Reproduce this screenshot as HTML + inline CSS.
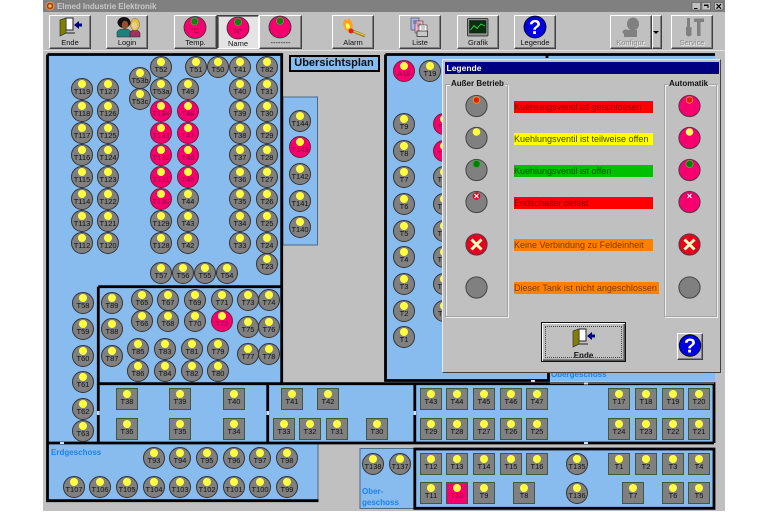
<!DOCTYPE html>
<html><head><meta charset="utf-8"><style>
html,body{margin:0;padding:0;background:#fff;width:768px;height:512px;overflow:hidden}
#w{position:absolute;left:0;top:0;width:768px;height:512px;overflow:hidden;filter:blur(.35px)}
#win{position:absolute;left:43px;top:0;width:682px;height:511px;background:#c0c0c0}
svg.l{position:absolute;left:0;top:0}
.t{position:absolute;width:22px;height:22px;margin:-11px 0 0 -11px;box-sizing:border-box;border:1px solid #333;border-radius:50%;background:#808080;color:#111;font:7.5px/25px "Liberation Sans",sans-serif;text-align:center}
.t:before{content:"";position:absolute;left:6px;top:1px;width:8px;height:8px;border-radius:50%;background:#ffff40}
.p{background:#f5006e;color:#8a003c;border-color:#70203c}
.s{border-radius:0;border-color:#3d5a3d}
.b{position:absolute;top:15px;width:42px;height:34px;box-sizing:border-box;padding-top:22px;border:1px solid;border-color:#fff #404040 #404040 #fff;box-shadow:inset -1px -1px 0 #808080;background:#c0c0c0;color:#111;font:7.5px/10px "Liberation Sans",sans-serif;text-align:center}
.dis{color:#8c8c8c;text-shadow:1px 1px 0 #eee}
.bl{position:absolute;color:#1e82e6;font:bold 8px/10px "Liberation Sans",sans-serif;white-space:nowrap}
#dlg{position:absolute;left:442px;top:59px;width:279px;height:314px;box-sizing:border-box;background:#c0c0c0;border:1px solid;border-color:#e8e8e8 #404040 #404040 #e8e8e8}
#cap{position:absolute;left:444.5px;top:62px;width:274px;height:11.5px;background:#000080;color:#fff;font:bold 8.5px/12px "Liberation Sans",sans-serif;padding-left:2px;box-sizing:border-box}
.g{position:absolute;top:83.5px;height:233px;box-sizing:border-box;border:1px solid #a4a4a4;box-shadow:1px 1px 0 #eee,inset 1px 1px 0 #eee}
.gl{position:absolute;top:79px;background:#c0c0c0;color:#111;font:bold 8px/10px "Liberation Sans",sans-serif;padding:0 1px;white-space:nowrap}
.bar{position:absolute;left:514px;width:139px;height:12px;font:9px/12px "Liberation Sans",sans-serif;white-space:nowrap}
#eb{position:absolute;left:541px;top:322px;width:85px;height:40px;box-sizing:border-box;background:#c0c0c0;border:1px solid #111;box-shadow:inset 1px 1px 0 #fff,inset -1px -1px 0 #555,inset -2px -2px 0 #808080;color:#111;font:bold 8px/10px "Liberation Sans",sans-serif;text-align:center;padding-top:28px}
#eb:before{content:"";position:absolute;left:3px;top:3px;right:3px;bottom:3px;border:1px dotted #444}
#hb{position:absolute;left:677px;top:333px;width:26px;height:27px;box-sizing:border-box;background:#c0c0c0;border:1px solid;border-color:#fff #404040 #404040 #fff;box-shadow:inset -1px -1px 0 #808080}
#title{position:absolute;left:43px;top:0;width:682px;height:12px;background:#808080}
#tt{position:absolute;left:57px;top:1px;color:#c8c8c8;font:bold 8px/11px "Liberation Sans",sans-serif;white-space:nowrap;letter-spacing:-.06px}
#ub{position:absolute;left:288.5px;top:54.5px;width:91px;height:17px;box-sizing:border-box;background:#88bbee;border:2px solid #000;color:#111;font:bold 11px/13px "Liberation Sans",sans-serif;text-align:center}
</style></head><body><div id="w">
<div id="win"></div>
<div id="title"></div>
<div id="tt">Elmed Industrie Elektronik</div>

<div class="b" style="left:49px">Ende</div>
<div class="b" style="left:106px">Login</div>
<div class="b" style="left:174px;width:43px">Temp.</div>
<div class="b" style="left:217px;width:42px;background:#e4e4e4;border-color:#404040 #fff #fff #404040;box-shadow:inset 1px 1px 0 #808080;padding-top:23px">Name</div>
<div class="b" style="left:259px;width:43px">--------</div>
<div class="b" style="left:332px">Alarm</div>
<div class="b" style="left:399px">Liste</div>
<div class="b" style="left:457px">Grafik</div>
<div class="b" style="left:514px">Legende</div>
<div class="b dis" style="left:610px">Konfigur.</div>
<div class="b" style="left:652px;width:10px"></div>
<div class="b dis" style="left:671px">Service</div>

<svg class="l" width="768" height="512" viewBox="0 0 768 512">
<path d="M43 50.5H725" stroke="#e0e0e0" stroke-width="1"/>
<path d="M48 55H281V384H415V443H318V500H48Z" fill="#88bbee"/>
<path d="M283 97H317.5V245H283Z" fill="#88bbee" stroke="#4a6a8a"/>
<path d="M385 55H715V381H385Z" fill="#88bbee"/>
<path d="M415 384H714V443H415Z" fill="#88bbee"/>
<path d="M415 449H714V508H415Z" fill="#88bbee"/>
<path d="M360 448.5H415V508.5H360Z" fill="#88bbee" stroke="#4a6a8a"/>
<path d="M318 444V501" stroke="#4a6a8a" stroke-width="1"/>
<g fill="none" stroke="#000" stroke-width="2.8">
<path d="M47.5 54.5H281.7V383.5"/>
<path d="M47.5 54.5V500.7H318.5" />
<path d="M98.3 286.7H281.7"/>
<path d="M98.3 286.7V443"/>
<path d="M98.3 383.7H550"/>
<path d="M47.5 443H714"/>
<path d="M267.7 384V443"/>
<path d="M414.8 384V443"/>
<path d="M385.5 54.5H715"/>
<path d="M385.5 54.5V380.5H548.5V372"/>
<path d="M547 54V58"/>
<path d="M550 383.7H714V443"/>
<path d="M414.8 449H714V508.3H414.8Z"/>
</g>
<path d="M550 383.2H714" stroke="#4a5a6a" stroke-width="1.5"/>
<g fill="#cfe2f5">
<rect x="97" y="411" width="2.5" height="4"/><rect x="266.5" y="411" width="2.5" height="4"/><rect x="413.5" y="411" width="2.5" height="4"/>
<rect x="60" y="442" width="4" height="2"/><rect x="584" y="442" width="4" height="2"/><rect x="584" y="382.5" width="4" height="2"/>
<rect x="531" y="380" width="4" height="2"/>
</g>
</svg>

<div id="ub">Übersichtsplan</div>
<div class="bl" style="left:51px;top:448px">Erdgeschoss</div>
<div class="bl" style="left:362px;top:487px">Ober-</div>
<div class="bl" style="left:362px;top:498px">geschoss</div>
<div class="bl" style="left:551px;top:370px">Obergeschoss</div>

<i class="t" style="left:82px;top:89px">T119</i><i class="t" style="left:108px;top:89px">T127</i>
<i class="t" style="left:82px;top:111px">T118</i><i class="t" style="left:108px;top:111px">T126</i>
<i class="t" style="left:82px;top:133px">T117</i><i class="t" style="left:108px;top:133px">T125</i>
<i class="t" style="left:82px;top:155px">T116</i><i class="t" style="left:108px;top:155px">T124</i>
<i class="t" style="left:82px;top:177px">T115</i><i class="t" style="left:108px;top:177px">T123</i>
<i class="t" style="left:82px;top:199px">T114</i><i class="t" style="left:108px;top:199px">T122</i>
<i class="t" style="left:82px;top:221px">T113</i><i class="t" style="left:108px;top:221px">T121</i>
<i class="t" style="left:82px;top:243px">T112</i><i class="t" style="left:108px;top:243px">T120</i>
<i class="t" style="left:140px;top:78px">T53b</i><i class="t" style="left:140px;top:99px">T53c</i>
<i class="t" style="left:161px;top:67px">T52</i><i class="t" style="left:161px;top:89px">T53a</i>
<i class="t p" style="left:161px;top:111px">T134</i><i class="t p" style="left:161px;top:133px">T133</i><i class="t p" style="left:161px;top:155px">T132</i><i class="t p" style="left:161px;top:177px">T131</i><i class="t p" style="left:161px;top:199px">T130</i>
<i class="t" style="left:161px;top:221px">T129</i><i class="t" style="left:161px;top:243px">T128</i>
<i class="t" style="left:188px;top:89px">T49</i><i class="t p" style="left:188px;top:111px">T48</i><i class="t p" style="left:188px;top:133px">T47</i><i class="t p" style="left:188px;top:155px">T46</i><i class="t p" style="left:188px;top:177px">T45</i>
<i class="t" style="left:188px;top:199px">T44</i><i class="t" style="left:188px;top:221px">T43</i><i class="t" style="left:188px;top:243px">T42</i>
<i class="t" style="left:196px;top:67px">T51</i><i class="t" style="left:218px;top:67px">T50</i>
<i class="t" style="left:240px;top:67px">T41</i><i class="t" style="left:240px;top:89px">T40</i><i class="t" style="left:240px;top:111px">T39</i><i class="t" style="left:240px;top:133px">T38</i><i class="t" style="left:240px;top:155px">T37</i><i class="t" style="left:240px;top:177px">T36</i><i class="t" style="left:240px;top:199px">T35</i><i class="t" style="left:240px;top:221px">T34</i><i class="t" style="left:240px;top:243px">T33</i>
<i class="t" style="left:267px;top:67px">T82</i><i class="t" style="left:267px;top:89px">T31</i><i class="t" style="left:267px;top:111px">T30</i><i class="t" style="left:267px;top:133px">T29</i><i class="t" style="left:267px;top:155px">T28</i><i class="t" style="left:267px;top:177px">T27</i><i class="t" style="left:267px;top:199px">T26</i><i class="t" style="left:267px;top:221px">T25</i><i class="t" style="left:267px;top:243px">T24</i><i class="t" style="left:267px;top:264px">T23</i>
<i class="t" style="left:161px;top:273px">T57</i><i class="t" style="left:183px;top:273px">T56</i><i class="t" style="left:205px;top:273px">T55</i><i class="t" style="left:227px;top:273px">T54</i>

<i class="t" style="left:300px;top:121px">T144</i><i class="t p" style="left:300px;top:147px">T143</i><i class="t" style="left:300px;top:174px">T142</i><i class="t" style="left:300px;top:201px">T141</i><i class="t" style="left:300px;top:227px">T140</i>

<i class="t p" style="left:404px;top:71px">A18</i><i class="t" style="left:430px;top:71px">T19</i>
<i class="t" style="left:404px;top:124px">T9</i><i class="t" style="left:404px;top:151px">T8</i><i class="t" style="left:404px;top:177px">T7</i><i class="t" style="left:404px;top:204px">T6</i><i class="t" style="left:404px;top:231px">T5</i><i class="t" style="left:404px;top:257px">T4</i><i class="t" style="left:404px;top:284px">T3</i><i class="t" style="left:404px;top:311px">T2</i><i class="t" style="left:404px;top:337px">T1</i>
<i class="t p" style="left:444px;top:124px">T18</i><i class="t p" style="left:444px;top:151px">T17</i><i class="t" style="left:444px;top:177px">T16</i><i class="t" style="left:444px;top:204px">T15</i><i class="t" style="left:444px;top:231px">T14</i><i class="t" style="left:444px;top:257px">T13</i><i class="t" style="left:444px;top:284px">T12</i><i class="t" style="left:444px;top:311px">T11</i>

<i class="t" style="left:83px;top:303px">T58</i><i class="t" style="left:83px;top:329px">T59</i><i class="t" style="left:83px;top:356px">T60</i><i class="t" style="left:83px;top:382px">T61</i><i class="t" style="left:83px;top:409px">T62</i><i class="t" style="left:83px;top:431px">T63</i>
<i class="t" style="left:112px;top:303px">T89</i><i class="t" style="left:112px;top:329px">T88</i><i class="t" style="left:112px;top:356px">T87</i>
<i class="t" style="left:142px;top:300px">T65</i><i class="t" style="left:168px;top:300px">T67</i><i class="t" style="left:195px;top:300px">T69</i><i class="t" style="left:222px;top:300px">T71</i><i class="t" style="left:248px;top:300px">T73</i><i class="t" style="left:269px;top:300px">T74</i>
<i class="t" style="left:142px;top:321px">T66</i><i class="t" style="left:168px;top:321px">T68</i><i class="t" style="left:195px;top:321px">T70</i><i class="t p" style="left:222px;top:321px">T72</i>
<i class="t" style="left:248px;top:327px">T75</i><i class="t" style="left:269px;top:327px">T76</i>
<i class="t" style="left:248px;top:354px">T77</i><i class="t" style="left:269px;top:354px">T78</i>
<i class="t" style="left:138px;top:349px">T85</i><i class="t" style="left:165px;top:349px">T83</i><i class="t" style="left:192px;top:349px">T81</i><i class="t" style="left:218px;top:349px">T79</i>
<i class="t" style="left:138px;top:371px">T86</i><i class="t" style="left:165px;top:371px">T84</i><i class="t" style="left:192px;top:371px">T82</i><i class="t" style="left:218px;top:371px">T80</i>

<i class="t s" style="left:127px;top:399px">T38</i><i class="t s" style="left:180px;top:399px">T39</i><i class="t s" style="left:234px;top:399px">T40</i>
<i class="t s" style="left:127px;top:429px">T36</i><i class="t s" style="left:180px;top:429px">T35</i><i class="t s" style="left:234px;top:429px">T34</i>
<i class="t s" style="left:292px;top:399px">T41</i><i class="t s" style="left:328px;top:399px">T42</i>
<i class="t s" style="left:284px;top:429px">T33</i><i class="t s" style="left:310px;top:429px">T32</i><i class="t s" style="left:337px;top:429px">T31</i><i class="t s" style="left:377px;top:429px">T30</i>

<i class="t s" style="left:431px;top:399px">T43</i><i class="t s" style="left:457px;top:399px">T44</i><i class="t s" style="left:484px;top:399px">T45</i><i class="t s" style="left:511px;top:399px">T46</i><i class="t s" style="left:537px;top:399px">T47</i>
<i class="t s" style="left:619px;top:399px">T17</i><i class="t s" style="left:646px;top:399px">T18</i><i class="t s" style="left:673px;top:399px">T19</i><i class="t s" style="left:699px;top:399px">T20</i>
<i class="t s" style="left:431px;top:429px">T29</i><i class="t s" style="left:457px;top:429px">T28</i><i class="t s" style="left:484px;top:429px">T27</i><i class="t s" style="left:511px;top:429px">T26</i><i class="t s" style="left:537px;top:429px">T25</i>
<i class="t s" style="left:619px;top:429px">T24</i><i class="t s" style="left:646px;top:429px">T23</i><i class="t s" style="left:673px;top:429px">T22</i><i class="t s" style="left:699px;top:429px">T21</i>

<i class="t s" style="left:431px;top:464px">T12</i><i class="t s" style="left:457px;top:464px">T13</i><i class="t s" style="left:484px;top:464px">T14</i><i class="t s" style="left:511px;top:464px">T15</i><i class="t s" style="left:537px;top:464px">T16</i>
<i class="t" style="left:577px;top:464px">T135</i>
<i class="t s" style="left:619px;top:464px">T1</i><i class="t s" style="left:646px;top:464px">T2</i><i class="t s" style="left:673px;top:464px">T3</i><i class="t s" style="left:699px;top:464px">T4</i>
<i class="t s" style="left:431px;top:493px">T11</i><i class="t s p" style="left:457px;top:493px;border-radius:0">T10</i><i class="t s" style="left:484px;top:493px">T9</i><i class="t s" style="left:524px;top:493px">T8</i>
<i class="t" style="left:577px;top:493px">T136</i>
<i class="t s" style="left:633px;top:493px">T7</i><i class="t s" style="left:673px;top:493px">T6</i><i class="t s" style="left:699px;top:493px">T5</i>

<i class="t" style="left:373px;top:464px">T138</i><i class="t" style="left:400px;top:464px">T137</i>

<i class="t" style="left:154px;top:458px">T93</i><i class="t" style="left:180px;top:458px">T94</i><i class="t" style="left:207px;top:458px">T95</i><i class="t" style="left:234px;top:458px">T96</i><i class="t" style="left:260px;top:458px">T97</i><i class="t" style="left:287px;top:458px">T98</i>
<i class="t" style="left:74px;top:487px">T107</i><i class="t" style="left:100px;top:487px">T106</i><i class="t" style="left:127px;top:487px">T105</i><i class="t" style="left:154px;top:487px">T104</i><i class="t" style="left:180px;top:487px">T103</i><i class="t" style="left:207px;top:487px">T102</i><i class="t" style="left:234px;top:487px">T101</i><i class="t" style="left:260px;top:487px">T100</i><i class="t" style="left:287px;top:487px">T99</i>

<div id="dlg"></div>
<div id="cap">Legende</div>
<div class="g" style="left:445px;width:63px"></div>
<div class="g" style="left:664px;width:53px"></div>
<div class="gl" style="left:450px">Außer Betrieb</div>
<div class="gl" style="left:668px">Automatik</div>
<div class="bar" style="top:101px;background:#f00;color:#800000">Kuehlungsventil ist geschlossen</div>
<div class="bar" style="top:133px;background:#ff0;color:#444400">Kuehlungsventil ist teilweise offen</div>
<div class="bar" style="top:165px;background:#00c000;color:#004c00">Kuehlungsventil ist offen</div>
<div class="bar" style="top:197px;background:#f00;color:#800000">Endschalter defekt</div>
<div class="bar" style="top:239px;background:#ff8000;color:#704000">Keine Verbindung zu Feldeinheit</div>
<div class="bar" style="top:282px;width:145px;background:#ff8000;color:#704000">Dieser Tank ist nicht angeschlossen</div>
<div id="eb">Ende</div>
<div id="hb"></div>

<svg class="l" width="768" height="512" viewBox="0 0 768 512" font-family="Liberation Sans, sans-serif">
<defs>
<g id="door">
<path d="M6 1H13V13H6Z" fill="#fff" stroke="#222"/>
<path d="M6 16H15" stroke="#222"/>
<path d="M0 3L6 1V16L0 19Z" fill="#808000" stroke="#333" stroke-width=".7"/>
<path d="M14 8L19 4V6.5H22V9.5H19V12Z" fill="#000080"/>
</g>
<g id="x"><path d="M-5 -5L5 5M5 -5L-5 5" stroke="#ffffc0" stroke-width="3"/></g>
</defs>
<!-- title -->
<circle cx="50" cy="6" r="4" fill="#b04010" stroke="#e0a060"/>
<circle cx="50" cy="6" r="1.6" fill="#f0c060"/>
<g fill="#c0c0c0" stroke="#555" stroke-width=".6">
<rect x="692" y="2.5" width="8.5" height="7.5"/><rect x="702" y="2.5" width="8.5" height="7.5"/><rect x="714.5" y="2.5" width="8.5" height="7.5"/>
</g>
<path d="M694 8.5H697.5" stroke="#000"/>
<path d="M704 5H708V8M704 5.5H708" stroke="#000" fill="none"/>
<path d="M716.5 4L721 8.7M721 4L716.5 8.7" stroke="#000" stroke-width="1.2"/>
<!-- toolbar -->
<use href="#door" transform="translate(60,17)"/>
<!-- login -->
<path d="M117 37V32Q118 29 124 29Q130 29 131 32V37Z" fill="#208080" stroke="#222" stroke-width=".5"/>
<path d="M130 37V32Q132 30 135 30Q139 30 140 33V37Z" fill="#a03060" stroke="#222" stroke-width=".5"/>
<ellipse cx="135" cy="24.5" rx="4.5" ry="6" fill="#e0c040" stroke="#806020" stroke-width=".5"/>
<ellipse cx="134.500" cy="25.500" rx="2.600" ry="3.500" fill="#f0c8a0"/>
<ellipse cx="124" cy="22.500" rx="6.500" ry="5.500" fill="#111"/>
<ellipse cx="125" cy="25" rx="3.300" ry="4.200" fill="#905030"/>
<!-- pink buttons -->
<circle cx="195" cy="27.500" r="11" fill="#f5006e" stroke="#333" stroke-width=".8"/>
<circle cx="194.500" cy="21.500" r="3.500" fill="#108010" stroke="#60a040" stroke-width=".8"/>
<text x="195" y="33" font-size="7" text-anchor="middle" fill="#8a003c">°C</text>
<circle cx="238" cy="28" r="11" fill="#f5006e" stroke="#333" stroke-width=".8"/>
<circle cx="238" cy="22" r="3.500" fill="#108010" stroke="#60a040" stroke-width=".8"/>
<text x="238" y="33.500" font-size="7" text-anchor="middle" fill="#8a003c">N°</text>
<circle cx="280" cy="27" r="11" fill="#f5006e" stroke="#333" stroke-width=".8"/>
<circle cx="280" cy="21" r="3.500" fill="#108010" stroke="#60a040" stroke-width=".8"/>
<!-- alarm -->
<path d="M349 29.500L365 36" stroke="#a08020" stroke-width="3"/>
<path d="M349 29.500L365 35.500" stroke="#e0d060" stroke-width="1"/>
<path d="M344 27Q342 22 345 19Q347 22 349 18Q353 23 353 27Q351 31 347 31Q345 30 344 27Z" fill="#ffa020"/>
<path d="M346 27Q345 24 347 23Q350 24 350 27Q349 29 347 29Z" fill="#ffff60"/>
<circle cx="351" cy="31" r="2.500" fill="#e02010"/>
<!-- liste -->
<rect x="411" y="18" width="8" height="12" fill="#b0b0f0" stroke="#444" stroke-width=".6"/>
<rect x="415" y="21" width="8" height="12" fill="#f0b0c0" stroke="#444" stroke-width=".6"/>
<rect x="419" y="25" width="8" height="8" fill="#fff" stroke="#333" stroke-width=".6"/>
<rect x="417" y="31" width="10.500" height="5.500" fill="#c8c8c8" stroke="#222" stroke-width=".7"/>
<path d="M413 21H417M413 23H417M417 24H421M417 26H419M421 27H425M421 29H425" stroke="#333" stroke-width=".5"/>
<!-- grafik -->
<rect x="467.500" y="18.500" width="20.500" height="17.500" fill="#909090" stroke="#222" stroke-width=".8" rx="1"/>
<rect x="469.500" y="20.500" width="16.500" height="12.500" fill="#0a3010" stroke="#111" stroke-width=".5"/>
<path d="M470.500 30L474 25.500L477 28.500L481 24L485 26" fill="none" stroke="#30e040" stroke-width=".9"/>
<!-- legende -->
<circle cx="535" cy="27" r="11" fill="#0000e0" stroke="#000" stroke-width=".8"/>
<text x="535" y="34" font-size="20" font-weight="bold" text-anchor="middle" fill="#fff">?</text>
<!-- konfigur -->
<g fill="#808080">
<ellipse cx="633" cy="24" rx="6" ry="6.500"/>
<path d="M629 30H637V37H624V33Z"/>
<ellipse cx="626" cy="32" rx="3.500" ry="2.500"/>
</g>
<path d="M653 32L659 32L656 35Z" fill="#000" transform="translate(0,-1)"/>
<!-- service -->
<g fill="#808080">
<path d="M687 18H690V27H691.500V35Q689 38 686 35V27H687Z"/>
<path d="M694 18.500H704V22H700.500V36H697V22H694Z"/>
</g>
<!-- legend circles left -->
<g stroke="#444" stroke-width="1">
<circle cx="476.500" cy="106" r="10.600" fill="#808080"/>
<circle cx="476.500" cy="138" r="10.600" fill="#808080"/>
<circle cx="476.500" cy="170" r="10.600" fill="#808080"/>
<circle cx="476.500" cy="202" r="10.600" fill="#808080"/>
<circle cx="476.500" cy="287.500" r="10.600" fill="#808080"/>
<circle cx="689.500" cy="287.500" r="10.600" fill="#808080"/>
<circle cx="476.500" cy="244.500" r="10.600" fill="#e80020"/>
<circle cx="689.500" cy="244.500" r="10.600" fill="#e80020"/>
</g>
<g stroke="#60304a" stroke-width="1" fill="#f5006e">
<circle cx="689.500" cy="106" r="10.600"/>
<circle cx="689.500" cy="138" r="10.600"/>
<circle cx="689.500" cy="170" r="10.600"/>
<circle cx="689.500" cy="202" r="10.600"/>
</g>
<use href="#x" x="476.500" y="244.500"/>
<use href="#x" x="689.500" y="244.500"/>
<g>
<circle cx="476.500" cy="100" r="3.300" fill="#e02000" stroke="#f09020"/>
<circle cx="689.500" cy="100" r="3.300" fill="#e02000" stroke="#f08050"/>
<circle cx="476.500" cy="132" r="3.800" fill="#ffff40"/>
<circle cx="689.500" cy="132" r="3.800" fill="#ffff60"/>
<circle cx="476.500" cy="164" r="3.600" fill="#008000" stroke="#40a040"/>
<circle cx="689.500" cy="164" r="3.600" fill="#008000" stroke="#60a040"/>
<circle cx="476.500" cy="196" r="3.800" fill="#e00020"/>
<circle cx="689.500" cy="196" r="3.800" fill="#e00060"/>
</g>
<path d="M474.500 194L478.500 198M478.500 194L474.500 198M687.500 194L691.500 198M691.500 194L687.500 198" stroke="#fff" stroke-width="1.200"/>
<!-- dialog icons -->
<use href="#door" transform="translate(573,328)"/>
<circle cx="690" cy="345.500" r="10.800" fill="#0000e0" stroke="#000" stroke-width=".8"/>
<text x="690" y="352.500" font-size="20" font-weight="bold" text-anchor="middle" fill="#fff">?</text>
</svg>
</div></body></html>
